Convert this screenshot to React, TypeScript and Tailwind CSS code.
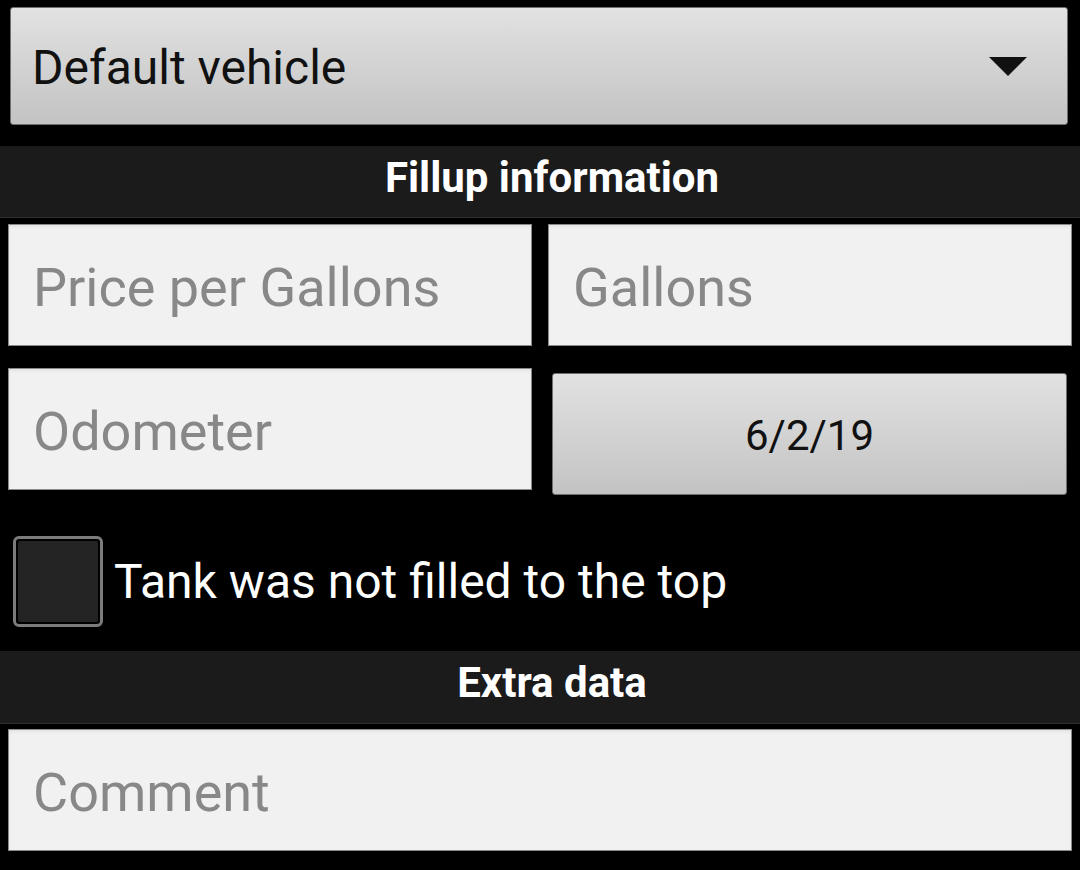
export default function App() {
    return (
        <div className="w-[1080px] h-[870px] bg-black overflow-hidden font-['Roboto','Liberation_Sans',sans-serif]">
            {/* vehicle spinner */}
            <div className="pt-[7px] pl-[10px] pr-[12px]">
                <div className="h-[118px] flex items-center justify-between rounded-[3px] border border-[#6f6f6f] bg-gradient-to-b from-[#e2e2e2] to-[#c3c3c3] pl-[21px] pr-[40px]">
                    <span className="text-[48px] text-[#111] leading-none pt-[4px]">Default vehicle</span>
                    <svg width="38" height="19" viewBox="0 0 38 19">
                        <polygon points="0,0 38,0 19,19" fill="#111" />
                    </svg>
                </div>
            </div>

            {/* section header */}
            <div className="mt-[21px] h-[72px] bg-[#1b1b1b] border-b border-[#2e2e2e] flex items-center justify-center pl-[24px] pb-[8px]">
                <span className="text-[42px] font-bold text-white leading-none">Fillup information</span>
            </div>

            <div className="px-[8px] pt-[6px] grid grid-cols-2 gap-x-[16px] gap-y-[22px]">
                <Field label="Price per Gallons" />
                <Field label="Gallons" />
                <Field label="Odometer" />
                <div className="pt-[5px] pl-[4px] pr-[5px]">
                    <div className="h-[122px] flex items-center justify-center rounded-[3px] border border-[#6f6f6f] bg-gradient-to-b from-[#e2e2e2] to-[#c3c3c3]">
                        <span className="text-[42px] text-[#111] leading-none pt-[3px]">6/2/19</span>
                    </div>
                </div>
            </div>

            {/* checkbox row */}
            <div className="mt-[41px] pl-[13px] flex items-center gap-[11px]">
                <div className="w-[90px] h-[91px] rounded-[6px] border-[3px] border-[#7c7c7c] bg-black p-[2px]">
                    <div className="w-full h-full bg-[#242424] rounded-[2px]" />
                </div>
                <span className="text-[48px] text-white leading-none">Tank was not filled to the top</span>
            </div>

            <div className="mt-[24px] h-[73px] bg-[#1b1b1b] border-b border-[#2e2e2e] flex items-center justify-center pl-[24px] pb-[8px]">
                <span className="text-[42px] font-bold text-white leading-none">Extra data</span>
            </div>

            <div className="px-[8px] pt-[5px]">
                <Field label="Comment" />
            </div>
        </div>
    );
}

function Field({ label }: { label: string }) {
    return (
        <div className="h-[122px] flex items-center border border-[#8a8a8a] bg-[#f1f1f1] shadow-[inset_0_2px_3px_rgba(0,0,0,0.06)] pl-[24px]">
            <span className="text-[54px] text-[#888] leading-none pt-[5px]">{label}</span>
        </div>
    );
}
